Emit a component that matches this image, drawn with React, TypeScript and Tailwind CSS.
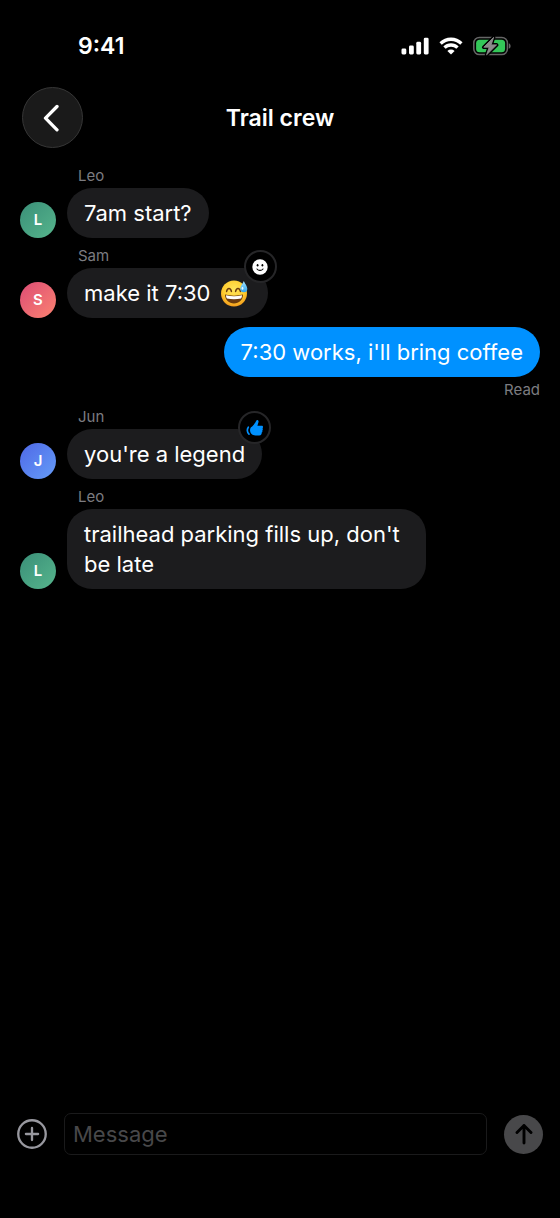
import { useState } from "react";
import { clsx } from "clsx";

type Reaction = "smile" | "like";

type Message = {
    id: number;
    author?: string;
    text: string;
    emoji?: boolean;
    reaction?: Reaction;
    status?: string;
};

const avatarColors: Record<string, string> = {
    Leo: "from-[#3a8f78] to-[#56b58c]",
    Sam: "from-[#dc4b74] to-[#fb8270]",
    Jun: "from-[#4f68e6] to-[#669cf8]",
};

const messages: Message[] = [
    { id: 1, author: "Leo", text: "7am start?" },
    { id: 2, author: "Sam", text: "make it 7:30", emoji: true, reaction: "smile" },
    { id: 3, text: "7:30 works, i'll bring coffee", status: "Read" },
    { id: 4, author: "Jun", text: "you're a legend", reaction: "like" },
    { id: 5, author: "Leo", text: "trailhead parking fills up, don't be late" },
];

function SignalIcon() {
    return (
        <svg width="28" height="18" viewBox="0 0 28 18" fill="#fff" aria-hidden="true">
            <rect x="0.5" y="11.5" width="4.8" height="6" rx="1.4" />
            <rect x="8" y="8.5" width="4.8" height="9" rx="1.4" />
            <rect x="15.3" y="4.8" width="4.8" height="12.7" rx="1.4" />
            <rect x="22.8" y="0.7" width="4.8" height="16.8" rx="1.4" />
        </svg>
    );
}

function WifiIcon() {
    return (
        <svg width="24" height="18" viewBox="0 0 24 18" aria-hidden="true">
            <g fill="none" stroke="#fff" strokeWidth="3.3">
                <path d="M1.6 6.5a14.8 14.8 0 0 1 20.800 0" />
                <path d="M5.5 10.7a9.200 9.200 0 0 1 13 0" />
            </g>
            <path d="M12 17.600l-3.600-3.700a5.100 5.100 0 0 1 7.200 0z" fill="#fff" />
        </svg>
    );
}

function BatteryIcon() {
    const bolt = "M20.6 1.4L10.8 11.2h5.400L13.600 18.800l10-9.900h-5.500z";

    return (
        <svg width="38" height="20" viewBox="0 0 38 20" aria-hidden="true">
            <rect x="0.8" y="1.4" width="33.6" height="17.2" rx="5.6" fill="none" stroke="#666" strokeWidth="1.5" />
            <path d="M35.8 7.2c1.300.5 1.800 1.600 1.800 2.800s-.5 2.300-1.800 2.800z" fill="#666" />
            <rect x="3.100" y="3.700" width="29" height="12.600" rx="3.600" fill="#34c759" />
            <path d={bolt} fill="#000" stroke="#000" strokeWidth="3.600" strokeLinejoin="round" />
            <path d={bolt} fill="#8b8b8b" stroke="#8b8b8b" strokeWidth="0.9" strokeLinejoin="round" />
        </svg>
    );
}

function SweatSmile() {
    return (
        <svg width="28" height="28" viewBox="0 0 28 28" className="mx-[3px] inline-block align-[-6px]" role="img" aria-label="grinning face with sweat">
            <defs>
                <radialGradient id="face" cx="0.5" cy="0.35" r="0.65">
                    <stop offset="0" stopColor="#ffe65c" />
                    <stop offset="0.65" stopColor="#ffcc2e" />
                    <stop offset="1" stopColor="#f29a1c" />
                </radialGradient>
                <linearGradient id="drop" x1="0" y1="0" x2="0" y2="1">
                    <stop offset="0" stopColor="#a5e4ff" />
                    <stop offset="1" stopColor="#2fa4ee" />
                </linearGradient>
            </defs>
            <circle cx="14" cy="14.5" r="13" fill="url(#face)" />
            <path d="M5 15.6c5.6 1.4 12.4 1.4 18 0 0 5.4-4 9-9 9s-9-3.6-9-9z" fill="#6b3a0e" />
            <path d="M6 16.3c5.2 1.2 10.8 1.2 16 0 0 1.5-.4 2.5-.9 3.2-4.6.9-9.6.9-14.2 0-.5-.7-.9-1.7-.9-3.2z" fill="#fff" />
            <path
                d="M6.6 12.4c.4-1.9 1.3-3 2.4-3s2 1.1 2.4 3M15.6 12.4c.4-1.9 1.3-3 2.4-3s2 1.1 2.4 3"
                fill="none"
                stroke="#6b3a0e"
                strokeWidth="1.5"
                strokeLinecap="round"
                strokeLinejoin="round"
            />
            <path d="M23.8 2c1.4 3 3.5 5.4 3.5 7.7a3.5 3.5 0 0 1-7 0c0-2.3 2.3-4.7 3.5-7.7z" fill="url(#drop)" />
            <ellipse cx="22.5" cy="9.2" rx="0.9" ry="1.5" fill="#e6f8ff" />
        </svg>
    );
}

function SmileIcon() {
    return (
        <svg width="16" height="16" viewBox="0 0 16 16" aria-hidden="true">
            <circle cx="8" cy="8" r="7.7" fill="#fff" />
            <ellipse cx="5.6" cy="6.2" rx="0.9" ry="1.2" fill="#000" />
            <ellipse cx="10.4" cy="6.2" rx="0.9" ry="1.2" fill="#000" />
            <path d="M5 10c1.5 1.9 4.5 1.9 6 0" fill="none" stroke="#000" strokeWidth="1.1" strokeLinecap="round" />
        </svg>
    );
}

function LikeIcon() {
    return (
        <svg width="18" height="18" viewBox="0 0 18 18" fill="#0091ff" aria-hidden="true">
            <path d="M4.8 8.6C7.200 7 8.600 4.800 10 2.200c.5-1 1.200-1.400 1.900-1 .8.400.8 1.300.5 2.300l-1 3.300h4.200c1 0 1.500.6 1.400 1.400 0 .4-.2.8-.5 1 .3.300.4.700.3 1.200 0 .5-.3.900-.6 1.100.2.300.3.700.2 1.100-.1.500-.4.900-.8 1.100.1.300.1.700 0 1-.3 1.200-1.400 1.900-4.300 1.900-3.600 0-5.800-.9-6.800-3.100-.7-1.600-.6-3.500.3-4.900z" />
            <path d="M2.300 8.200c-1.500 2-1.300 5.200.7 7" fill="none" stroke="#0091ff" strokeWidth="1.7" strokeLinecap="round" />
        </svg>
    );
}

function StatusBar() {
    return (
        <div className="flex h-[87px] items-start justify-between pl-[78px] pr-[49px] pt-[31px]">
            <span className="text-[23px] font-semibold leading-[30px]">9:41</span>
            <div className="flex h-[30px] items-center gap-[10px]">
                <SignalIcon />
                <WifiIcon />
                <BatteryIcon />
            </div>
        </div>
    );
}

function Header() {
    return (
        <header className="grid grid-cols-[61px_1fr_61px] items-center px-[22px]">
            <button
                aria-label="Back"
                className="flex size-[61px] items-center justify-center rounded-full border border-[#363636] bg-[#1a1a1a]"
            >
                <svg width="18" height="28" viewBox="0 0 18 28" className="mr-1" aria-hidden="true">
                    <path d="M15 2.5L3.500 14.200 15 25.800" fill="none" stroke="#fff" strokeWidth="3.3" strokeLinecap="round" strokeLinejoin="round" />
                </svg>
            </button>
            <h1 className="text-center text-[23px] font-semibold leading-[30px]">Trail crew</h1>
        </header>
    );
}

function MessageRow({ message }: { message: Message }) {
    const { author, text, emoji, reaction, status } = message;
    const mine = !author;

    return (
        <li className={clsx("flex flex-col", mine && "items-end")}>
            {author && <span className="mb-1 pl-[58px] text-[15px] leading-[17px] text-[#7c7c80]">{author}</span>}
            <div className={clsx("flex items-end gap-[11px]", mine ? "max-w-[75%]" : "max-w-[78%]")}>
                {author && (
                    <div
                        className={clsx(
                            "flex size-9 shrink-0 items-center justify-center rounded-full bg-linear-to-br text-[15px] font-semibold",
                            avatarColors[author]
                        )}
                    >
                        {author[0]}
                    </div>
                )}
                <div
                    className={clsx(
                        "relative rounded-[25px] px-[17px] py-[10px] text-[22px] leading-[30px]",
                        mine ? "bg-[#0091ff]" : "bg-[#1c1c1e]"
                    )}
                >
                    <p>
                        {text}
                        {emoji && <> <SweatSmile /></>}
                    </p>
                    {reaction && (
                        <span className="absolute -right-[9px] -top-[18px] flex size-[33px] items-center justify-center rounded-full border-2 border-[#262628] bg-black">
                            {reaction === "smile" ? <SmileIcon /> : <LikeIcon />}
                        </span>
                    )}
                </div>
            </div>
            {status && <span className="mt-1 text-[15px] leading-[18px] text-[#7c7c80]">{status}</span>}
        </li>
    );
}

function Composer() {
    const [draft, setDraft] = useState("");

    return (
        <form className="flex items-center gap-[17px] px-[17px] pb-[63px]" onSubmit={(e) => e.preventDefault()}>
            <button type="button" aria-label="Add attachment" className="shrink-0">
                <svg width="30" height="30" viewBox="0 0 31 31" fill="none" stroke="#98989f" strokeWidth="2.4" strokeLinecap="round" aria-hidden="true">
                    <circle cx="15.5" cy="15.5" r="14.2" />
                    <path d="M9.2 15.5h12.600M15.500 9.200v12.600" />
                </svg>
            </button>
            <input
                type="text"
                aria-label="Message"
                placeholder="Message"
                value={draft}
                onChange={(e) => setDraft(e.target.value)}
                className="h-[42px] min-w-0 flex-1 rounded-[7px] border border-[#1a1a1b] bg-black px-2 text-[22px] leading-[30px] text-white outline-none placeholder:text-[#48484a]"
            />
            <button
                type="submit"
                aria-label="Send"
                className="flex size-[39px] shrink-0 items-center justify-center rounded-full bg-[#48484a]"
            >
                <svg width="18" height="22" viewBox="0 0 18 22" fill="none" stroke="#000" strokeWidth="2.9" strokeLinecap="round" strokeLinejoin="round" aria-hidden="true">
                    <path d="M9 20V2.500M2 9.500l7-7 7 7" />
                </svg>
            </button>
        </form>
    );
}

export default function App() {
    return (
        <div className="flex min-h-screen flex-col bg-black font-['Inter',sans-serif] text-white">
            <StatusBar />
            <Header />
            <main className="flex-1 px-5 pt-[19px]">
                <ul className="flex flex-col gap-[9px]">
                    {messages.map((message) => (
                        <MessageRow key={message.id} message={message} />
                    ))}
                </ul>
            </main>
            <Composer />
        </div>
    );
}
